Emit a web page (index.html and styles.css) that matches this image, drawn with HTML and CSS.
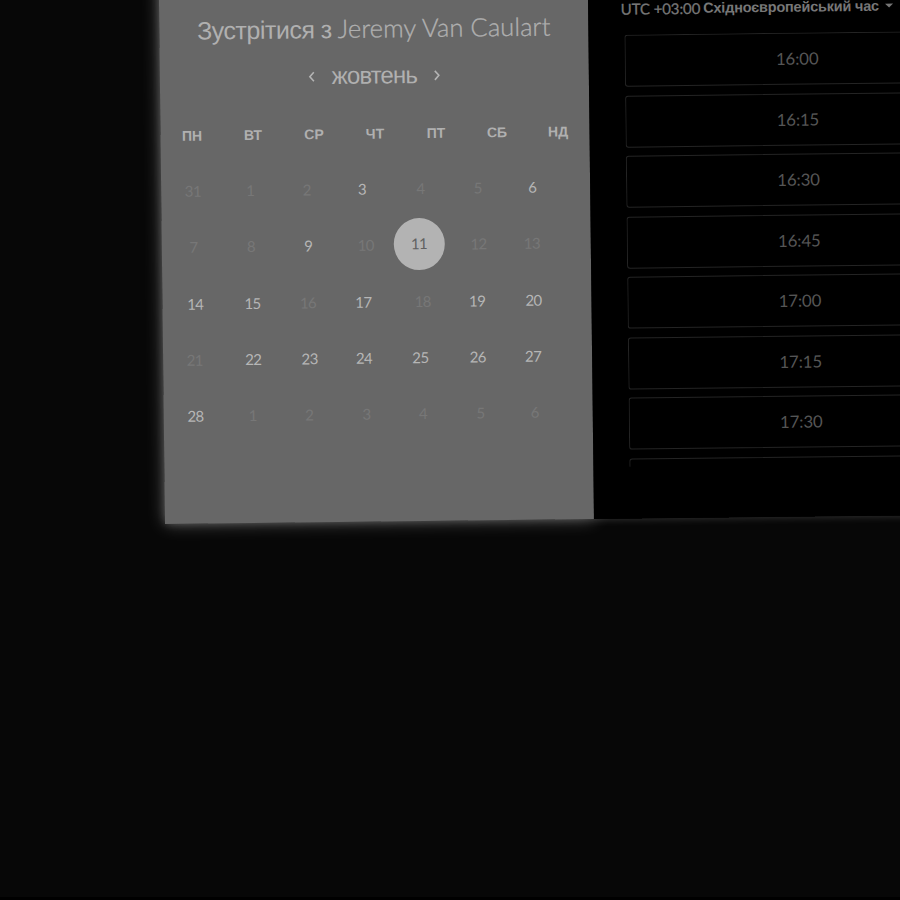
FILE: index.html
```
<!DOCTYPE html>
<html lang="uk">
<head>
<meta charset="utf-8">
<title>Зустрітися з Jeremy Van Caulart</title>
<link rel="stylesheet" href="styles.css">
</head>
<body>
<main class="card">
  <section class="calendar">
    <h1 class="title"><span class="title-uk">Зустрітися з</span><span class="title-name">Jeremy Van Caulart</span></h1>
    <div class="month">
      <svg class="chevron prev" viewBox="0 0 8 12"><path d="M6 1.5 2 6l4 4.5"/></svg>
      <span class="month-name">жовтень</span>
      <svg class="chevron" viewBox="0 0 8 12"><path d="M2 1.5 6 6l-4 4.5"/></svg>
    </div>
    <div class="weekdays"><span>ПН</span><span>ВТ</span><span>СР</span><span>ЧТ</span><span>ПТ</span><span>СБ</span><span>НД</span></div>
    <div class="days">
      <span>31</span><span class="s1">1</span><span class="s1">2</span><span class="on">3</span><span class="s2">4</span><span class="s3">5</span><span class="on s1">6</span>
      <span>7</span><span class="s1">8</span><span class="on s2">9</span><span class="s3">10</span><span class="selected">11</span><span class="s3">12</span><span>13</span>
      <span class="on s1">14</span><span class="on s2">15</span><span class="s1">16</span><span class="on">17</span><span class="s3">18</span><span class="on s1">19</span><span class="on s1">20</span>
      <span>21</span><span class="on s2">22</span><span class="on s2">23</span><span class="on">24</span><span class="on">25</span><span class="on s1">26</span><span class="on">27</span>
      <span class="on">28</span><span class="s1">1</span><span class="s1">2</span><span class="s2">3</span><span class="s2">4</span><span class="s3">5</span><span class="s1">6</span>
    </div>
  </section>
  <section class="times">
    <div class="zone"><span class="utc">UTC +03:00</span><span class="zone-name">Східноєвропейський час</span><span class="caret"></span></div>
    <div class="slots">
      <div class="slot">16:00</div>
      <div class="slot">16:15</div>
      <div class="slot">16:30</div>
      <div class="slot">16:45</div>
      <div class="slot">17:00</div>
      <div class="slot">17:15</div>
      <div class="slot">17:30</div>
      <div class="slot"></div>
    </div>
  </section>
</main>
</body>
</html>
```
FILE: styles.css
```
* { box-sizing: border-box; }
html { height: 100%; background: #000; overflow: hidden; }
body {
  margin: 0;
  height: 897px;
  overflow: hidden;
  background: #070707;
  font-family: Lato, "Liberation Sans", sans-serif;
}
.card {
  display: flex;
  width: 847px;
  height: 560px;
  margin: -36.4px 0 0 165px;
  transform: rotate(-0.66deg);
  transform-origin: 0 100%;
  box-shadow: 0 0 8px rgba(255, 255, 255, .2);
}
.calendar {
  width: 429px;
  flex: none;
  padding-top: 46px;
  background: #676767;
  color: #b0b0b0;
  box-shadow: 0 0 18px rgba(255, 255, 255, .3);
}
.title {
  display: flex;
  justify-content: center;
  align-items: baseline;
  gap: 6px;
  margin: 0;
  height: 40px;
  line-height: 40px;
  font-weight: 400;
  white-space: nowrap;
}
.title-uk { font: 25px/40px "Liberation Sans", sans-serif; letter-spacing: -.5px; }
.title-name {
  font-size: 25.5px;
  font-weight: 300;
  letter-spacing: .1px;
  -webkit-text-stroke: .3px #b0b0b0;
}
.month {
  display: flex;
  justify-content: center;
  align-items: center;
  gap: 16px;
  height: 54px;
  margin-top: 1px;
}
.month-name { font: 24px/54px "Liberation Sans", sans-serif; letter-spacing: -.9px; }
.chevron { width: 8px; height: 13px; fill: none; stroke: #b3b3b3; stroke-width: 1.6; }
.weekdays {
  display: grid;
  grid-template-columns: repeat(7, 61px);
  margin: 20.5px 0 0 1px;
  text-align: center;
  font: bold 14px/20px "Liberation Sans", sans-serif;
}
.days {
  display: grid;
  grid-template-columns: repeat(7, 56.4px);
  grid-auto-rows: 56.3px;
  margin: 17.3px 0 0 3.5px;
  place-items: center;
  font-size: 15px;
  letter-spacing: -.6px;
  color: #777;
}
.on { color: #b6b6b6; }
.s1 { margin-left: 2px; }
.s2 { margin-left: 4px; }
.s3 { margin-left: 6px; }
.selected {
  width: 51px;
  height: 52px;
  border-radius: 50%;
  background: #b3b3b3;
  color: #606060;
  text-align: center;
  line-height: 50px;
}
.times {
  position: relative;
  flex: 1;
  padding: 40px 36.6px 0 35.6px;
  background: #000;
}
.zone {
  display: flex;
  align-items: center;
  gap: 3px;
  height: 20px;
  margin-left: -3px;
  color: #777;
  font-size: 15px;
  white-space: nowrap;
}
.utc { letter-spacing: -.1px; -webkit-text-stroke: .3px #777; }
.zone-name { font: bold 14.5px/20px "Liberation Sans", sans-serif; letter-spacing: -.22px; }
.caret {
  margin-left: 3px;
  border: 4px solid transparent;
  border-top-color: #777;
  border-bottom: 0;
}
.slots {
  display: flex;
  flex-direction: column;
  gap: 8.5px;
  height: 431.7px;
  margin-top: 16.3px;
  overflow: hidden;
}
.slot {
  flex: none;
  height: 52px;
  border: 1px solid #242424;
  border-radius: 3px;
  text-align: center;
  font-size: 16.8px;
  line-height: 50px;
  letter-spacing: -.1px;
  color: #555;
}
```
